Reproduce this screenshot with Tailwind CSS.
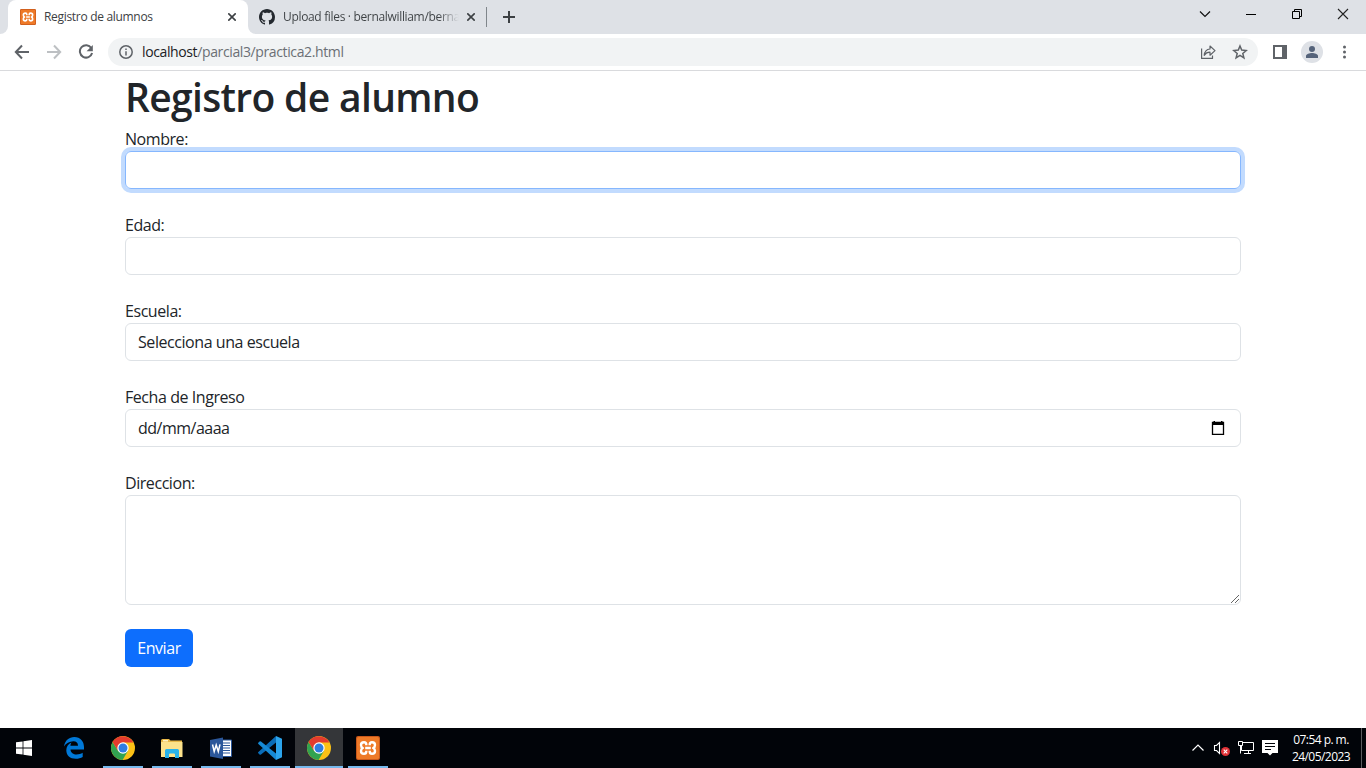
<!DOCTYPE html>
<html lang="es">
<head>
<meta charset="utf-8">
<title>Registro de alumnos</title>
<script src="https://cdn.jsdelivr.net/npm/@tailwindcss/browser@4"></script>
</head>
<body class="flex h-[768px] w-[1366px] flex-col overflow-hidden bg-white font-['Open_Sans',sans-serif] text-[#212529]">

<svg class="hidden">
  <symbol id="chrome" viewBox="0 0 24 24">
    <circle cx="12" cy="12" r="12" fill="#fbc116"/>
    <path d="M1.600 6A12 12 0 0 0 11.600 24L17 14.700 7.200 15Z" fill="#31a350"/>
    <path d="M1.600 6A12 12 0 0 1 22.400 6.500H12L7 14.800Z" fill="#e33b2e"/>
    <circle cx="12" cy="12" r="5.700" fill="#fff"/>
    <circle cx="12" cy="12" r="4.500" fill="#2f7de1"/>
  </symbol>
  <symbol id="xampp" viewBox="0 0 24 24">
    <rect width="24" height="24" rx="2" fill="#c9581a"/>
    <rect x="1" y="1" width="22" height="22" rx="1.500" fill="#ee7a28"/>
    <path d="M10.300 9.300V8.500C10.300 6.800 9.500 6.200 8 6.200 6 6.200 5 7.200 5 9 5 10.500 5.600 11.500 6.800 12 5.600 12.500 5 13.500 5 15 5 16.800 6 17.800 8 17.800 9.500 17.800 10.300 17.200 10.300 15.500V14.700M13.700 9.300V8.500C13.700 6.800 14.500 6.200 16 6.200 18 6.200 19 7.200 19 9 19 10.500 18.400 11.500 17.200 12 18.400 12.500 19 13.500 19 15 19 16.800 18 17.800 16 17.800 14.500 17.800 13.700 17.200 13.700 15.500V14.700M9.200 12H14.800" fill="none" stroke="#fff" stroke-width="2.400" stroke-linejoin="round"/>
  </symbol>
</svg>

<header class="shrink-0">
  <!-- tab strip -->
  <div class="flex h-[34px] bg-[#dee1e6]">
    <div class="flex w-2 items-end bg-white"><div class="h-full w-2 rounded-br-lg bg-[#dee1e6]"></div></div>
    <div class="bg-[#dee1e6]">
      <div class="flex h-[34px] w-60 items-center rounded-t-lg bg-white pl-3">
        <svg class="size-4"><use href="#xampp"/></svg>
        <span class="ml-2 w-[184px] whitespace-nowrap text-xs tracking-[-0.31px] text-[#3c4043]">Registro de alumnos</span>
        <svg class="size-2" viewBox="0 0 8 8" stroke="#3c4043" stroke-width="1.600"><path d="M.3.3 7.700 7.700M7.700.3.3 7.700"/></svg>
      </div>
    </div>
    <div class="bg-white">
      <div class="flex h-[34px] w-[238px] items-center rounded-bl-lg bg-[#dee1e6] pl-[11px]">
        <svg class="size-4" viewBox="0 0 16 16" fill="#24292f"><path d="M8 0C3.580 0 0 3.580 0 8c0 3.540 2.290 6.530 5.470 7.590.4.070.550-.170.550-.380 0-.190-.010-.820-.010-1.490-2.010.370-2.530-.490-2.690-.940-.090-.230-.480-.940-.820-1.130-.280-.150-.680-.520-.010-.530.630-.010 1.080.580 1.230.820.720 1.210 1.870.870 2.330.660.070-.520.280-.870.510-1.070-1.780-.200-3.640-.890-3.640-3.950 0-.870.310-1.590.820-2.150-.080-.200-.360-1.020.080-2.120 0 0 .670-.210 2.200.820.640-.180 1.320-.270 2-.270s1.360.090 2 .270c1.530-1.040 2.200-.820 2.200-.820.440 1.100.160 1.920.080 2.120.510.560.820 1.270.820 2.150 0 3.070-1.870 3.750-3.650 3.950.290.250.540.730.540 1.480 0 1.070-.010 1.930-.010 2.200 0 .210.150.460.550.380A8.010 8.010 0 0 0 16 8c0-4.420-3.580-8-8-8z"/></svg>
        <span class="ml-2 w-[176px] whitespace-nowrap bg-[linear-gradient(90deg,#3c4043_88%,#dee1e6)] bg-clip-text text-xs tracking-[-0.33px] text-transparent">Upload files · bernalwilliam/berna</span>
        <svg class="ml-2 size-2" viewBox="0 0 8 8" stroke="#3c4043" stroke-width="1.600"><path d="M.3.3 7.700 7.700M7.700.3.3 7.700"/></svg>
      </div>
    </div>
    <div class="mt-[7px] h-5 w-px bg-[#80868b]"></div>
    <svg class="ml-4 mt-[11px] size-3" viewBox="0 0 12 12" stroke="#3c4043" stroke-width="2"><path d="M6 0V12M0 6H12"/></svg>
    <div class="ml-auto flex items-center gap-[34px] pb-1.5 pr-[17px] pt-0">
      <svg class="h-3 w-3" viewBox="0 0 12 12" fill="none" stroke="#111" stroke-width="1.200"><path d="M1 3.500 6 8.500 11 3.500"/></svg>
      <svg class="h-3 w-3" viewBox="0 0 12 12" stroke="#000"><path d="M1 6.500H11"/></svg>
      <svg class="h-3 w-3" viewBox="0 0 12 12" fill="none" stroke="#000"><path d="M1.500 3.500H8.500V10.500H1.500ZM3.500 3.500V1.500H10.500V8.500H8.500"/></svg>
      <svg class="h-3 w-3" viewBox="0 0 12 12" stroke="#222" stroke-width="1.100"><path d="M1 1 11 11M11 1 1 11"/></svg>
    </div>
  </div>
  <!-- toolbar -->
  <div class="flex h-[37px] items-center border-b border-[#d9dadd] bg-white pl-3.5">
    <svg class="size-4" viewBox="0 0 16 16" fill="none" stroke="#5f6368" stroke-width="2"><path d="M15 8H2.500M8 1.500 1.800 8 8 14.500"/></svg>
    <svg class="ml-4 size-4" viewBox="0 0 16 16" fill="none" stroke="#bdc0c3" stroke-width="2"><path d="M1 8H13.500M8 1.500 14.200 8 8 14.500"/></svg>
    <svg class="ml-4 size-4" viewBox="0 0 16 16"><path d="M13.300 4A6.200 6.200 0 1 0 14.100 9" fill="none" stroke="#5f6368" stroke-width="2"/><path d="M14.800 1V7.200H8.600Z" fill="#5f6368"/></svg>
    <div class="ml-3.5 flex h-7 w-[1150px] items-center rounded-full bg-[#f1f3f4] pl-[11px] pr-2.5">
      <svg class="size-3.5" viewBox="0 0 14 14" fill="none" stroke="#5f6368" stroke-width="1.500"><circle cx="7" cy="7" r="6.200"/><path d="M7 6.200V10.500M7 3.500V5"/></svg>
      <span class="ml-[9px] text-sm tracking-[-0.38px] text-[#6b6f74]"><span class="text-[#202124]">localhost</span>/parcial3/practica2.html</span>
      <svg class="ml-auto size-4" viewBox="0 0 16 16" fill="none" stroke="#5f6368" stroke-width="1.200"><path d="M1.600 4.500V14.400H12.500V11.500M4.200 11.300C4.600 7.500 6.500 5.300 10 5V2L15 6.600 10 11.200V8.200C7.500 8.200 5.700 9 4.200 11.300Z" stroke-linejoin="round"/></svg>
      <svg class="ml-4 size-4" viewBox="0 0 16 16" fill="none" stroke="#5f6368" stroke-width="1.500"><path d="M8 2 9.700 6.100 14.200 6.500 10.800 9.400 11.900 13.800 8 11.400 4.100 13.800 5.200 9.400 1.800 6.500 6.300 6.100Z"/></svg>
    </div>
    <svg class="ml-[15px] size-3.5" viewBox="0 0 14 14"><path d="M0 0H14V14H0ZM2 2V12H9V2Z" fill="#5f6368" fill-rule="evenodd"/></svg>
    <svg class="ml-3.5 size-[22px]" viewBox="0 0 22 22"><circle cx="11" cy="11" r="11" fill="#dee1e6"/><circle cx="11" cy="8" r="3" fill="#55637a"/><path d="M5 17V15C5 13 8.500 12 11 12S17 13 17 15V17Z" fill="#55637a"/></svg>
    <svg class="ml-5 h-3.5 w-[3px]" viewBox="0 0 3 14" fill="#5f6368"><circle cx="1.500" cy="2" r="1.500"/><circle cx="1.500" cy="7" r="1.500"/><circle cx="1.500" cy="12" r="1.500"/></svg>
  </div>
</header>

<!-- page -->
<main class="flex-1 px-[125px]">
  <h1 class="mb-2 h-12 whitespace-nowrap pt-0.5 text-[39px] font-semibold leading-[48px] tracking-[-0.66px]">Registro de alumno</h1>
  <form class="flex flex-col gap-6 text-base leading-6 tracking-[-0.44px]">
    <div>
      <label class="block h-6">Nombre:</label>
      <input class="block h-[38px] w-full rounded-md border border-[#86b7fe] px-3 outline-none ring-4 ring-[#c2dbfe]">
    </div>
    <div>
      <label class="block h-6">Edad:</label>
      <input class="block h-[38px] w-full rounded-md border border-[#dee2e6] px-3 outline-none">
    </div>
    <div>
      <label class="block h-6">Escuela:</label>
      <div class="flex h-[38px] items-center rounded-md border border-[#dee2e6] px-3">Selecciona una escuela</div>
    </div>
    <div>
      <label class="block h-6">Fecha de Ingreso</label>
      <div class="flex h-[38px] items-center justify-between rounded-md border border-[#dee2e6] pl-3 pr-[15px]">
        <span class="tracking-[-0.5px]">dd/mm/aaaa</span>
        <svg class="h-3.5 w-[14px]" viewBox="0 0 14 14"><path d="M1.500 1.500H12.500V13.300H1.500Z" fill="none" stroke="#000" stroke-width="1.300"/><path d="M1 1.200H13V4H1ZM2.500 0H4V2H2.500ZM10 0H11.500V2H10Z"/></svg>
      </div>
    </div>
    <div>
      <label class="block h-6">Direccion:</label>
      <div class="flex h-[110px] items-end justify-end rounded-md border border-[#dee2e6] pb-px pr-px">
        <svg class="size-2" viewBox="0 0 8 8" stroke="#555" stroke-width=".9"><path d="M0 8 8 0M4 8 8 4"/></svg>
      </div>
    </div>
    <button type="button" class="h-[38px] w-[68px] rounded-md bg-[#0d6efd] text-white">Enviar</button>
  </form>
</main>

<!-- taskbar -->
<footer class="flex h-10 shrink-0 bg-[#010409]">
  <div class="mr-0.5 flex w-12 items-center justify-center">
    <svg class="size-4" viewBox="0 0 16 16" fill="#fff"><path d="M0 2.300 6.600 1.400V7.600H0ZM7.400 1.300 16 0V7.600H7.400ZM0 8.400H6.600V14.600L0 13.700ZM7.400 8.400H16V16L7.400 14.700Z"/></svg>
  </div>
  <div class="flex gap-px">
    <div class="flex w-12 items-center justify-center">
      <svg class="h-[22px] w-5" viewBox="0 0 20 22"><path d="M0 9.500C1 3.500 5 0 10.300 0 16.500 0 20 4.500 20 10V12.500H6.500C6.700 16 9.500 17.500 12.500 17.500 15 17.500 17 16.800 18.700 15.800V20C16.800 21.200 14.500 21.800 11.800 21.800 6 21.800 2.300 18.500 2.300 13.300 2.300 9.700 4.300 7 7.500 5.500 6.800 6.500 6.500 7.600 6.400 8.800H14C14 6 12.500 4.300 9.300 4.300 5.500 4.300 2 6.500 0 9.500Z" fill="#0078d7"/></svg>
    </div>
    <div class="flex w-12 flex-col items-center justify-between pt-2">
      <svg class="size-6"><use href="#chrome"/></svg>
      <div class="h-0.5 w-10 bg-[#76b9ed]"></div>
    </div>
    <div class="flex w-12 flex-col items-center justify-between pt-2">
      <svg class="size-6" viewBox="0 0 24 24"><path d="M1 4.500Q1 3 2.500 3H9L10.500 4.500H22V21H1Z" fill="#e9b949"/><path d="M3 4H8V5.500H3Z" fill="#fff3c4"/><path d="M1 6H22.500V21H1Z" fill="#fce28b"/><path d="M5 22V14.500Q5 13 6.500 13H17.500Q19 13 19 14.500V22H15V18.500Q15 17.500 14 17.500H10Q9 17.500 9 18.500V22Z" fill="#29b3ea"/></svg>
      <div class="h-0.5 w-10 bg-[#76b9ed]"></div>
    </div>
    <div class="flex w-12 flex-col items-center justify-between pt-2">
      <svg class="size-6" viewBox="0 0 24 24"><path d="M12 4H22.500V20.500H12Z" fill="#fff" stroke="#2b579a"/><path d="M14 7H21M14 9.500H21M14 12H21M14 14.500H21M14 17H21" stroke="#2b579a" stroke-width="1.200"/><path d="M1 4 14 1.500V23L1 20.500Z" fill="#2b579a"/><path d="M3.500 8.500 5.200 15.500 7.200 9 9.300 15.500 11 8.300" fill="none" stroke="#fff" stroke-width="1.500"/></svg>
      <div class="h-0.5 w-10 bg-[#76b9ed]"></div>
    </div>
    <div class="flex w-12 flex-col items-center justify-between pt-2">
      <svg class="size-6" viewBox="0 0 24 24"><path d="M18 0 24 2.800V21.200L18 24Z" fill="#2ba4ec"/><path d="M18 0V6.500L3 18.500Q2.200 19 1.500 18.400L.3 17.300Q-.3 16.600.4 16Z" fill="#0a6db8"/><path d="M18 24V17.500L3 5.500Q2.200 5 1.500 5.600L.3 6.700Q-.3 7.400.4 8Z" fill="#1689d4"/></svg>
      <div class="h-0.5 w-10 bg-[#76b9ed]"></div>
    </div>
    <div class="flex w-12 flex-col items-center justify-between bg-[#343639] pt-2">
      <svg class="size-6"><use href="#chrome"/></svg>
      <div class="h-0.5 w-12 bg-[#76b9ed]"></div>
    </div>
    <div class="flex w-12 flex-col items-center justify-between pt-2">
      <svg class="size-6"><use href="#xampp"/></svg>
      <div class="h-0.5 w-10 bg-[#76b9ed]"></div>
    </div>
  </div>
  <div class="ml-auto flex items-center text-white">
    <svg class="h-3 w-3" viewBox="0 0 12 12" fill="none" stroke="#fff" stroke-width="1.200"><path d="M.5 8.500 6 3 11.500 8.500"/></svg>
    <svg class="ml-[9px] h-4 w-[18px]" viewBox="0 0 18 16"><path d="M1.500 5.500H3.500L6.500 2.500V13.500L3.500 10.500H1.500Z" fill="none" stroke="#fff" stroke-width="1.100"/><circle cx="12.500" cy="11.500" r="4.500" fill="#e03136"/><path d="M10.700 9.700 14.300 13.300M14.300 9.700 10.700 13.300" stroke="#fff" stroke-width="1.100"/></svg>
    <svg class="ml-[7px] h-4 w-4" viewBox="0 0 16 16" fill="none" stroke="#fff"><path d="M4.500 2.500H15.500V10.500H3.500V6M10.500 10.500V13.500M6 13.500H13M.5 1.500H4.500V5.500H.5ZM2.500 5.500V13.500"/></svg>
    <svg class="ml-2 h-4 w-4" viewBox="0 0 16 16"><path d="M0 0H16V13H10.500L8 15.500 5.500 13H0Z" fill="#fff"/><path d="M3 3.500H13M3 6.500H13M3 9.500H9" stroke="#010409"/></svg>
    <div class="ml-[13px] flex w-[60px] flex-col items-center whitespace-nowrap text-xs leading-[17px] tracking-[-0.55px]"><span>07:54 p. m.</span><span>24/05/2023</span></div>
    <div class="ml-[10px] h-10 w-px bg-[#5a5c5f]"></div>
    <div class="w-1"></div>
  </div>
</footer>
</body>
</html>
